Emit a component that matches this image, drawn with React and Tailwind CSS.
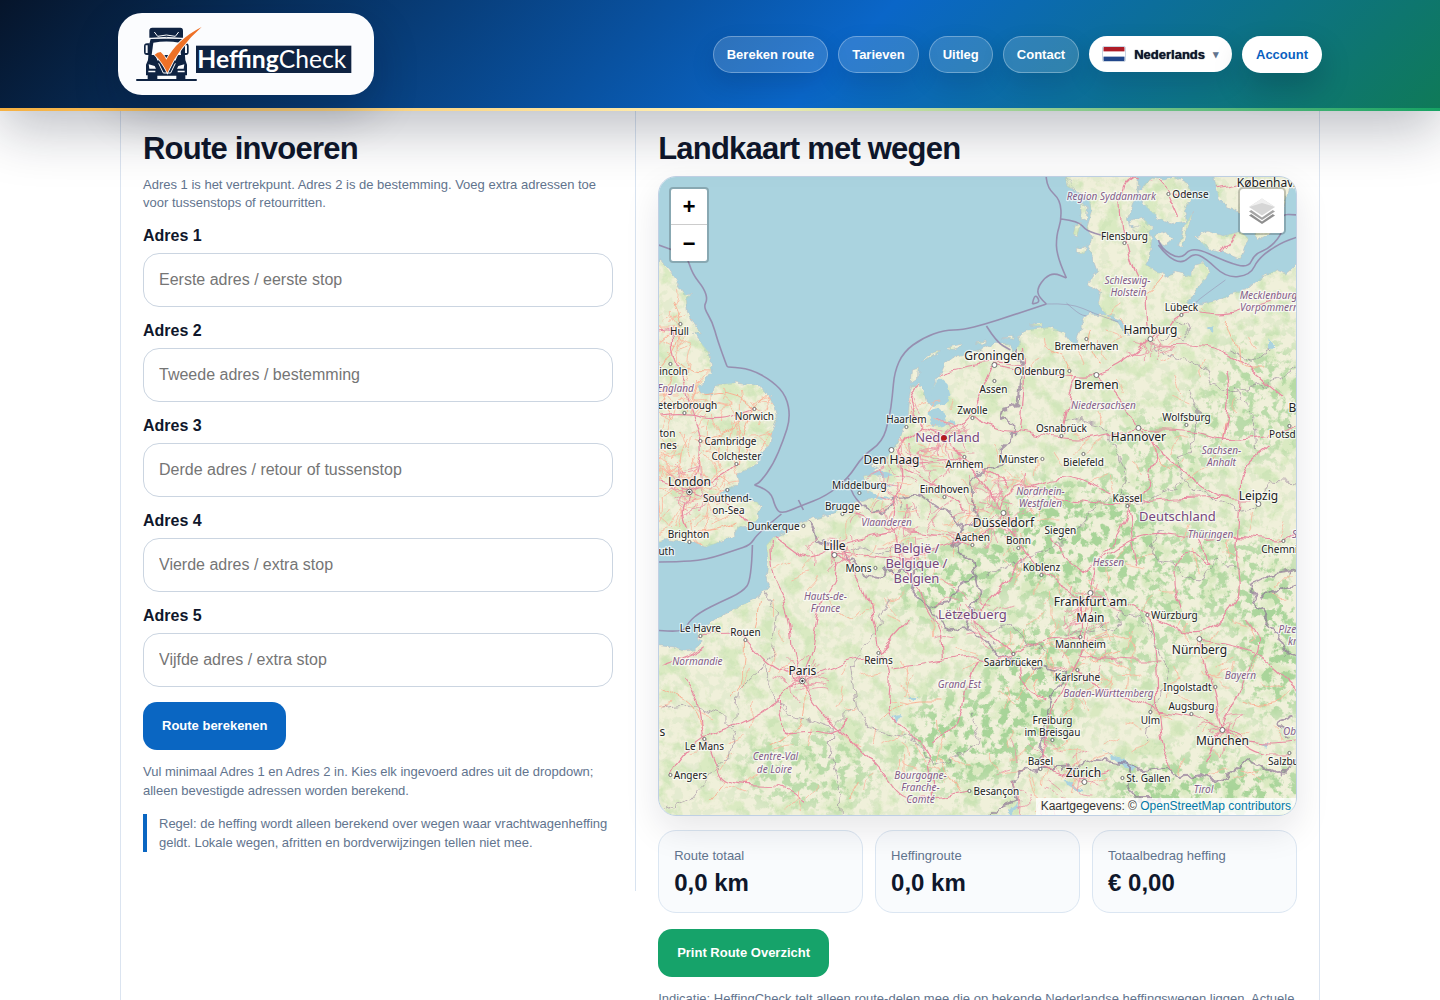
import { useState } from "react";

const navLinks = ["Bereken route", "Tarieven", "Uitleg", "Contact"];

const fields = [
  { id: "adres-1", label: "Adres 1", placeholder: "Eerste adres / eerste stop" },
  { id: "adres-2", label: "Adres 2", placeholder: "Tweede adres / bestemming" },
  { id: "adres-3", label: "Adres 3", placeholder: "Derde adres / retour of tussenstop" },
  { id: "adres-4", label: "Adres 4", placeholder: "Vierde adres / extra stop" },
  { id: "adres-5", label: "Adres 5", placeholder: "Vijfde adres / extra stop" },
];

const totals = [
  { label: "Route totaal", value: "0,0 km" },
  { label: "Heffingroute", value: "0,0 km" },
  { label: "Totaalbedrag heffing", value: "€ 0,00" },
];

// Map geometry
const land = [
  // England
  "M650 255L661 262L668 270L676 281L682 290L686 296L691 295L686 300L687 312L694 325L701 334L692 332L700 342L708 352L711 371L704 380L697 387L701 394L713 393L716 385L733 383L755 385L765 391L773 403L776 418L772 432L768 446L760 453L755 464L746 470L737 473L739 481L732 489L724 490L718 494L728 497L737 501L757 502L760 506L757 520L748 526L739 527L733 535L722 541L706 547L694 543L680 542L668 540L650 545Z",
  // France up to Jutland, then back along the Baltic
  "M650 645L672 647L684 651L692 650L702 641L697 637L696 632L705 627L720 616L742 605L760 596L769 585L766 575L768 560L766 545L772 538L786 532L803 522L830 514L848 505L862 501L872 498L866 490L872 484L866 478L874 470L882 462L892 450L901 434L908 417L909 397L911 385L919 384L925 396L926 404L933 402L938 396L931 389L939 378L945 364L956 356L975 351L998 343L1009 344L1014 352L1019 344L1018 335L1026 330L1050 327L1063 332L1070 341L1076 347L1079 335L1084 318L1090 314L1105 315L1118 323L1128 336L1120 319L1105 314L1098 304L1100 292L1088 283L1092 276L1098 272L1093 258L1087 247L1092 238L1086 228L1091 212L1088 200L1080 192L1070 188L1065 177L1062 170L1138 170L1139 190L1132 204L1128 218L1131 228L1146 226L1151 240L1150 255L1145 264L1156 272L1165 276L1176 272L1190 276L1195 265L1203 263L1209 272L1203 282L1194 293L1188 303L1202 304L1216 301L1230 293L1246 290L1262 276L1276 270L1286 274L1305 258L1305 825L650 825Z",
  "M1145 183L1152 178L1164 180L1176 177L1188 184L1192 197L1184 210L1186 221L1174 223L1158 219L1146 207L1138 194Z",
  "M1192 213L1187 228L1182 247L1179 244L1184 226Z",
  "M1153 235L1165 232L1172 240L1163 246ZM1130 221L1143 218L1152 228L1145 236L1133 231Z",
  "M1212 170L1305 170L1296 186L1288 190L1284 205L1270 232L1258 240L1250 228L1242 214L1226 206L1218 196Z",
  "M1195 236L1208 231L1222 236L1240 232L1248 238L1240 259L1226 253L1206 248Z",
  "M1080 203L1086 206L1085 220L1081 219ZM1075 225L1081 223L1077 236L1073 234ZM1077 246L1086 248L1084 254L1077 253ZM1064 178L1070 180L1074 192L1067 187Z",
  "M912 370L918 368L917 378L911 382ZM921 362L932 353L940 350L930 358ZM948 347L962 344L961 347L950 350ZM975 343L986 341L985 344ZM1003 338L1014 336L1013 339ZM1030 325L1042 323L1041 326Z",
  "M863 476L874 474L882 478L876 484L866 483ZM870 463L884 464L880 471Z",
];

const water = [
  "M931 388L941 379L947 384L950 396L944 404L934 407L928 401ZM928 411L938 409L946 416L942 426L932 427ZM936 424L954 421L955 423L938 427Z",
  "M868 471L884 472L894 475L884 477L870 474ZM866 482L880 486L896 484L880 490L864 486ZM868 492L880 496L892 497L880 500L866 496Z",
  "M1101 750L1112 756L1125 760L1137 768L1131 771L1118 764ZM1063 778L1074 785L1083 791L1078 792L1067 785ZM1007 812L1018 803L1020 806L1010 815Z",
  "M1206 328L1212 325L1213 332ZM1268 337L1274 347L1269 350ZM1261 745L1268 742L1266 749ZM908 697L917 697L912 702ZM890 717L901 715L896 721Z",
];

const borders = [
  "M1012 346L1022 366L1020 385L1018 405L1003 408L1000 418L1014 425L1012 440L1000 450L1002 463L985 468L972 480L973 500L972 512L980 520L963 528L953 543L960 556L972 560L976 575L960 586L948 602L928 606L912 592L915 570L886 570L884 578L863 575L860 568L843 555L843 548L816 541L812 527L803 510L798 503",
  "M862 506L874 513L886 510L894 498L905 496L915 492L926 500L938 508L951 512L962 530L955 545",
  "M976 575L980 590L972 606L966 628L950 630L940 620L928 608",
  "M966 628L986 640L1000 657L1040 668L1066 673L1057 688L1048 705L1042 740L1038 768L1020 772L1012 782L1018 800L998 808L985 820",
  "M1040 768L1060 768L1085 766L1095 760L1130 764L1140 770L1168 768L1180 778L1200 775L1222 782L1248 760L1258 765L1280 775L1296 760",
  "M1130 764L1128 790L1140 800L1162 800M1290 737L1277 722L1292 716",
  "M1296 570L1270 575L1250 585L1255 600L1272 628L1285 650L1297 662M1297 585L1275 590L1260 598",
];

const seaLimits = [
  "M650 242L672 250L686 255L692 274L704 289L707 300L703 307L712 322L717 340L726 365L727 367L729 367L750 369L772 381L786 396L790 418L783 440L773 464L760 482L754 485M754 485L770 490L775 508L781 514L800 506L826 496L848 478L862 456L882 442L889 418L892 396L894 372L903 352L922 338L944 330L962 330L985 324L1010 316L1046 304",
  "M1046 304L1038 297L1037 288L1045 277L1054 273L1066 278M1066 278L1056 256L1056 235L1061 220L1060 200L1047 188L1045 170",
  "M650 562L675 562L705 560L735 550L750 545L756 535L781 514M752 545L751 580L742 592L720 602L700 612L688 622L684 632L650 630",
  "M803 510L798 500M848 478L850 492L862 506M1061 219L1078 221L1086 231L1104 236M986 326L996 342L1010 350M1032 304L1034 293L1040 302L1032 304",
  "M1158 245L1166 256L1182 264L1193 253L1205 258L1226 278L1250 275L1258 258L1280 243L1297 237M1158 240L1160 248L1180 260L1192 246L1226 262L1248 268L1254 254L1270 248L1284 230L1280 214L1297 215",
];
const fairways = ["M1046 304L1070 303L1095 314L1118 322", "M1066 303L1078 314L1086 316", "M1225 280L1200 298L1194 304"];

const stateLines = [
  "M1160 340L1170 335L1184 340L1190 328L1176 320M1150 345L1170 356L1190 362L1212 372L1206 384L1230 392L1262 386L1280 378L1297 365M1188 390L1198 410L1198 430L1190 452L1175 455L1180 470L1185 485L1215 500L1240 512L1255 508L1270 480L1297 482",
  "M1060 420L1075 418L1100 425L1112 445L1128 475L1122 492L1100 500L1084 522L1060 545L1030 555L1010 565L985 575M1122 492L1140 505L1165 492L1180 485M1160 530L1150 545L1157 560L1170 562L1185 575L1200 582L1215 560L1240 570",
  "M1095 620L1105 632L1120 625L1118 610L1140 615L1152 636L1160 655L1168 670L1160 695L1150 710L1145 740M1044 650L1028 645L1012 624L985 632M1065 635L1095 632",
  "M762 590L776 610L772 650L765 665L768 685L785 715L810 720L832 728L855 705L850 665L870 640L880 620L888 600M832 728L830 755L838 790L840 815M855 705L872 730L915 740L935 765L960 755L980 740L970 715",
  "M660 708L690 704L720 715L735 730L728 760L710 775L690 800L660 812M735 725L738 690L765 665",
  "M843 552L860 548L880 555L900 545L935 550M895 498L902 510L920 505M1256 450L1255 420L1240 400L1235 385M1230 350L1250 360L1270 350",
];

const motorways = [
  "M689 490L700 470L703 442L690 410L684 380L670 350L672 330L659 332M689 490L720 478L737 464M689 490L680 510L688 532M689 490L710 500L738 508L750 522M689 490L659 480M659 415L684 412L715 420L754 408",
  "M770 534L785 545L805 560L830 550L834 545M770 540L768 570L785 600L790 625L792 655L802 680M834 552L840 570L820 600L815 640L802 675M834 550L860 575L870 610L878 655",
  "M802 680L775 670L755 650L745 637L725 632L700 637M802 680L780 700L735 725L704 735L680 760L670 776M802 682L812 705L845 735L880 770L900 800L925 800L968 790M802 680L850 660L878 655L892 670L885 722L932 745L932 800",
  "M780 700L780 735L810 730L836 735L850 720M704 735L715 765L725 785L790 785L805 805M892 668L940 662L975 655L990 662L1012 657M932 745L962 720L965 690L978 660M878 655L910 620M660 665L690 655L705 645M704 735L700 700L685 680",
  "M834 545L860 538L893 530L940 535L972 545M893 530L894 505L900 490L905 470L895 455L905 440L918 428M893 530L898 555L910 580L940 625L942 660M842 512L870 520L893 530M834 552L870 556L915 560L945 545L972 540L995 530L1003 515",
  "M918 428L944 437L964 460L985 485L1000 510M944 437L970 415L985 385L994 365M905 470L944 490L963 510M905 440L893 455L915 462L944 458L964 460L990 470L1008 488M918 428L910 400L915 388L935 375L960 368L994 362L1020 366",
  "M970 415L1000 430L1018 430L1061 440L1090 440L1110 435L1138 430L1190 430L1220 440L1270 435L1297 425M1000 510L1008 488L1030 485L1060 475L1090 485L1110 495M1020 430L1025 380L1022 350M1061 435L1070 395L1078 375",
  "M994 365L1020 372L1065 375L1095 377L1120 365L1140 350L1150 340M1150 340L1180 310L1200 312L1225 315L1250 305L1297 290M1150 340L1145 310L1147 290L1135 275L1124 243L1120 210L1122 185L1133 177M1150 345L1190 345L1220 350L1245 365L1280 395",
  "M1095 377L1120 395L1137 430L1158 450L1150 475L1143 500L1127 505L1122 530L1095 565L1090 600L1085 640L1078 670L1060 690L1048 720L1040 768M1138 430L1180 470L1220 500L1250 500M1127 505L1132 540L1137 565",
  "M1003 515L1020 545L1040 572L1070 590L1090 600L1120 600L1147 615L1199 640L1240 605L1235 560L1240 500L1240 470L1270 445M1050 540L1065 560L1090 575L1110 550L1150 530L1200 540L1235 535L1283 542L1297 530",
  "M1199 640L1210 680L1222 728M1199 640L1250 645L1297 690M1222 728L1190 715L1157 712L1120 695L1085 680L1078 672M1157 712L1158 660L1147 615M1222 728L1250 755L1289 755M1222 728L1245 680L1260 640L1245 620M1078 655L1120 660L1160 660",
  "M1012 657L1030 640L1080 637M1012 655L1000 640L972 620M1020 665L1023 690L1045 700M1040 768L1062 775L1083 780L1110 770M1028 555L1000 590L972 620M1030 485L1060 500L1127 505L1170 500L1230 498M1222 440L1230 400L1225 370M1157 712L1160 750L1175 770",
  "M1157 177L1168 195L1192 192L1240 185M1133 177L1150 180M1168 195L1178 218M1215 257L1230 240L1245 205M1180 610L1170 580L1180 555L1200 555L1215 570L1200 540M1080 600L1080 640M1222 728L1205 760M1297 740L1255 745L1225 730",
];

const regionalRoads = [
  "M668 350L684 370L711 371M670 300L680 320L675 345L660 370M672 370L660 400L672 420M754 408L740 440L737 464M754 408L766 395M754 408L735 390L700 395M700 441L725 435L754 410",
  "M689 532L720 530L738 522M802 680L808 700L800 730L770 745M760 600L755 630M745 640L745 680L730 700M830 600L850 620L860 610M880 720L900 700L940 700M940 760L960 790M1016 700L1030 680L1040 660",
  "M1150 440L1155 460L1170 470M1205 470L1220 450L1225 420M1168 270L1150 295L1140 290M1225 320L1240 345L1238 370L1265 370M1275 590L1290 575M1090 660L1120 650M1060 720L1075 700L1100 680M1245 700L1270 710L1290 690",
  "M1060 230L1065 228M1090 330L1085 340L1100 365M1050 350L1065 355L1070 372M660 690L690 700L705 730M725 780L710 800M860 780L850 800",
];

// rounds the corners of an M/L path, segment by segment
function smooth(paths) {
  return paths
    .join("")
    .split("M")
    .filter(Boolean)
    .map((line) => {
      const pts = line.split("L").map((p) => p.trim().split(" ").map(Number));
      let d = `M${pts[0].join(" ")}`;
      for (let i = 1; i < pts.length - 1; i++) {
        const [x, y] = pts[i];
        const [nx, ny] = pts[i + 1];
        d += `Q${x} ${y} ${(x + nx) / 2} ${(y + ny) / 2}`;
      }
      return `${d}L${pts[pts.length - 1].join(" ")}`;
    })
    .join("");
}

// deterministic scatter of local roads round the large cities
function scatter(seed, hubs) {
  let s = seed;
  const rnd = () => {
    s = (s * 16807) % 2147483647;
    return s / 2147483647;
  };
  let d = "";
  hubs.forEach(([cx, cy, r, n]) => {
    for (let i = 0; i < n; i++) {
      const a = rnd() * Math.PI * 2;
      const q = Math.sqrt(rnd()) * r;
      let x = cx + Math.cos(a) * q;
      let y = cy + Math.sin(a) * q;
      let dir = rnd() * Math.PI * 2;
      d += `M${Math.round(x)} ${Math.round(y)}`;
      for (let k = 0; k < 3; k++) {
        dir += rnd() - 0.5;
        x += Math.cos(dir) * (4 + rnd() * 5);
        y += Math.sin(dir) * (4 + rnd() * 5);
        d += `L${Math.round(x)} ${Math.round(y)}`;
      }
    }
  });
  return d;
}

const localOrange = scatter(71, [
  [689, 490, 50, 80], [690, 430, 55, 60], [668, 330, 30, 26], [735, 425, 38, 28],
  [930, 440, 40, 26], [900, 535, 60, 34], [1010, 500, 45, 30], [1140, 560, 140, 36],
  [1080, 640, 60, 34], [1050, 790, 60, 26], [800, 690, 130, 40], [1200, 700, 90, 28],
  [1150, 380, 120, 26], [960, 700, 80, 20],
]);
const localPink = scatter(29, [
  [689, 490, 22, 18], [930, 445, 38, 36], [905, 510, 48, 40], [1000, 505, 30, 38],
  [802, 680, 14, 20], [1090, 610, 26, 18], [1150, 340, 16, 10], [1222, 728, 14, 10],
  [1080, 650, 30, 12], [1050, 785, 45, 22], [965, 610, 30, 16], [834, 555, 30, 12],
]);

const cities = [
  ["Hull", 679, 335], ["incoln", 673, 375], ["eterborough", 687, 409], ["Norwich", 754, 420],
  ["ton", 667, 437], ["nes", 668, 449], ["Cambridge", 730, 445], ["Colchester", 736, 460],
  ["Southend-", 727, 502], ["on-Sea", 728, 514], ["Brighton", 688, 538], ["uth", 666, 555],
  ["Odense", 1190, 198], ["Flensburg", 1124, 240], ["Lübeck", 1181, 311], ["Bremerhaven", 1086, 350],
  ["Oldenburg", 1039, 375], ["Assen", 993, 393], ["Zwolle", 972, 414], ["Haarlem", 906, 423],
  ["Osnabrück", 1061, 432], ["Wolfsburg", 1186, 421], ["Potsd", 1282, 438], ["Münster", 1018, 463],
  ["Bielefeld", 1083, 466], ["Arnhem", 964, 468], ["Middelburg", 859, 489], ["Eindhoven", 944, 493],
  ["Kassel", 1127, 502], ["Brugge", 842, 510], ["Dunkerque", 773, 530], ["Aachen", 972, 541],
  ["Bonn", 1018, 544], ["Siegen", 1060, 534], ["Mons", 858, 572], ["Koblenz", 1041, 571],
  ["Chemni", 1279, 553], ["Le Havre", 700, 632], ["Rouen", 745, 636], ["Reims", 878, 664],
  ["Würzburg", 1174, 619], ["Mannheim", 1080, 648], ["Saarbrücken", 1013, 666], ["Karlsruhe", 1077, 681],
  ["Ingolstadt", 1187, 691], ["Augsburg", 1191, 710], ["Ulm", 1150, 724], ["Freiburg", 1052, 724],
  ["im Breisgau", 1052, 736], ["Le Mans", 704, 750], ["Angers", 690, 779], ["Basel", 1040, 765],
  ["St. Gallen", 1148, 782], ["Besançon", 996, 795], ["Salzbu", 1283, 765],
];
const bigCities = [
  ["London", 689, 486], ["Københav.", 1266, 187], ["Hamburg", 1150, 334], ["Groningen", 994, 360],
  ["Bremen", 1096, 389], ["Hannover", 1138, 441], ["B", 1292, 412], ["Den Haag", 891, 464],
  ["Leipzig", 1258, 500], ["Düsseldorf", 1003, 527], ["Lille", 834, 550], ["Frankfurt am", 1090, 606],
  ["Main", 1090, 622], ["Nürnberg", 1199, 654], ["Paris", 802, 675], ["München", 1222, 745],
  ["Zürich", 1083, 777], ["s", 662, 736],
];
const regions = [
  ["England", 675, 392], ["Region Syddanmark", 1111, 200], ["Schleswig-", 1127, 284], ["Holstein", 1128, 296],
  ["Mecklenburg", 1268, 299], ["Vorpommern", 1269, 311], ["Niedersachsen", 1103, 409], ["Sachsen-", 1221, 454],
  ["Anhalt", 1221, 466], ["Nordrhein-", 1040, 495], ["Westfalen", 1040, 507], ["Vlaanderen", 886, 526],
  ["Hauts-de-", 825, 600], ["France", 825, 612], ["Hessen", 1108, 566], ["Thüringen", 1210, 538],
  ["Normandie", 697, 665], ["Grand Est", 959, 688], ["Baden-Württemberg", 1108, 697], ["Bayern", 1240, 679],
  ["Centre-Val", 775, 760], ["de Loire", 774, 773], ["Bourgogne-", 920, 779], ["Franche-", 920, 791],
  ["Comté", 920, 803], ["Tirol", 1203, 793], ["Plze", 1287, 633], ["kr", 1292, 645], ["Ob", 1289, 735], ["S", 1294, 538],
];
const countries = [
  ["Nederland", 947, 442], ["Deutschland", 1177, 521], ["België /", 916, 553], ["Belgique /", 916, 568],
  ["Belgien", 916, 583], ["Lëtzebuerg", 972, 619],
];

const smallDots = [
  [680, 324], [670, 364], [684, 413], [754, 409], [700, 441], [736, 464], [727, 490], [689, 542],
  [1168, 194], [1124, 243], [1181, 315], [1086, 339], [1069, 371], [994, 381], [972, 418], [906, 427],
  [1061, 436], [1186, 425], [1289, 426], [1042, 459], [1083, 454], [964, 457], [859, 493], [944, 497],
  [1127, 506], [842, 514], [803, 526], [972, 545], [1018, 548], [1060, 538], [875, 568], [1041, 575],
  [1283, 541], [700, 636], [745, 640], [878, 653], [1147, 615], [1080, 637], [1013, 654], [1077, 670],
  [1215, 687], [1191, 714], [1150, 712], [1052, 740], [704, 739], [670, 775], [1040, 769], [1122, 778],
  [969, 791], [1289, 753],
];
const bigDots = [[1150, 339], [994, 365], [1096, 375], [1138, 428], [891, 450], [1258, 504], [1003, 513], [834, 555], [1090, 593], [1199, 639], [1222, 730], [1084, 782]];
const capitals = [[689, 492], [802, 681]];

function Labels({ items, className }) {
  return (
    <g className={className} textAnchor="middle">
      {items.map(([text, x, y]) => (
        <text key={text + x + y} x={x} y={y}>{text}</text>
      ))}
    </g>
  );
}

function RoadMap() {
  return (
    <svg
      viewBox="658 177 638 638"
      preserveAspectRatio="xMidYMid slice"
      className="h-full w-full bg-[#aad3df] font-['Noto_Sans',sans-serif]"
      role="img"
      aria-label="Landkaart"
    >
      <defs>
        <clipPath id="land-clip">
          <path d={land.join("")} />
        </clipPath>
        <filter id="coast" filterUnits="userSpaceOnUse" x="640" y="160" width="680" height="680" colorInterpolationFilters="sRGB">
          <feTurbulence type="fractalNoise" baseFrequency="0.12" numOctaves="3" seed="4" result="n" />
          <feDisplacementMap in="SourceGraphic" in2="n" scale="7" xChannelSelector="R" yChannelSelector="G" />
        </filter>
        <filter id="bends" filterUnits="userSpaceOnUse" x="640" y="160" width="680" height="680" colorInterpolationFilters="sRGB">
          <feTurbulence type="fractalNoise" baseFrequency="0.045" numOctaves="2" seed="9" result="n" />
          <feDisplacementMap in="SourceGraphic" in2="n" scale="13" xChannelSelector="R" yChannelSelector="G" />
        </filter>
        <filter id="jagged" filterUnits="userSpaceOnUse" x="640" y="160" width="680" height="680" colorInterpolationFilters="sRGB">
          <feTurbulence type="fractalNoise" baseFrequency="0.1" numOctaves="2" seed="5" result="n" />
          <feDisplacementMap in="SourceGraphic" in2="n" scale="12" xChannelSelector="R" yChannelSelector="G" />
        </filter>
        <filter id="woods" filterUnits="userSpaceOnUse" x="640" y="160" width="680" height="680" colorInterpolationFilters="sRGB">
          <feTurbulence type="fractalNoise" baseFrequency="0.11" numOctaves="5" seed="12" />
          <feColorMatrix values="0 0 0 0 0.66  0 0 0 0 0.83  0 0 0 0 0.6  8 0 0 0 -3.9" result="w" />
          <feComposite in="w" in2="SourceGraphic" operator="in" />
        </filter>
        <filter id="meadow" filterUnits="userSpaceOnUse" x="640" y="160" width="680" height="680" colorInterpolationFilters="sRGB">
          <feTurbulence type="fractalNoise" baseFrequency="0.05" numOctaves="5" seed="31" />
          <feColorMatrix values="0 0 0 0 0.8  0 0 0 0 0.9  0 0 0 0 0.7  6 0 0 0 -3" result="w" />
          <feComposite in="w" in2="SourceGraphic" operator="in" />
        </filter>
        <filter id="soft">
          <feGaussianBlur stdDeviation="14" />
        </filter>
        <mask id="hills">
          <g fill="#fff" filter="url(#soft)">
            <rect x="640" y="160" width="700" height="700" fillOpacity="0.16" />
            <ellipse cx="1070" cy="540" rx="95" ry="60" />
            <ellipse cx="1160" cy="455" rx="60" ry="50" fillOpacity="0.6" />
            <ellipse cx="1210" cy="575" rx="90" ry="45" fillOpacity="0.8" />
            <ellipse cx="945" cy="585" rx="50" ry="35" />
            <ellipse cx="1030" cy="690" rx="45" ry="75" />
            <ellipse cx="1275" cy="650" rx="40" ry="70" />
            <ellipse cx="1210" cy="790" rx="110" ry="35" />
            <ellipse cx="960" cy="740" rx="60" ry="50" />
            <ellipse cx="810" cy="770" rx="70" ry="40" fillOpacity="0.7" />
            <ellipse cx="1260" cy="400" rx="60" ry="60" fillOpacity="0.7" />
            <ellipse cx="1130" cy="640" rx="70" ry="40" fillOpacity="0.6" />
          </g>
        </mask>
      </defs>

      <g filter="url(#coast)">
        <path d={land.join("")} fill="#f0f0da" stroke="#b9bfc4" strokeWidth="0.6" />
      </g>
      <g clipPath="url(#land-clip)">
        <rect x="640" y="160" width="680" height="680" filter="url(#meadow)" opacity="0.6" />
        <g mask="url(#hills)">
          <rect x="640" y="160" width="680" height="680" filter="url(#woods)" />
        </g>
      </g>
      <g filter="url(#coast)">
        <path d={water.join("")} fill="#aad3df" />
      </g>

      <g fill="none" strokeLinejoin="round" clipPath="url(#land-clip)">
        <g filter="url(#bends)">
          <path d={smooth([localOrange])} stroke="#fbb59d" strokeWidth="0.8" />
          <path d={smooth(regionalRoads)} stroke="#fbab8f" strokeWidth="0.9" />
        </g>
        <path d={stateLines.join("")} stroke="#8b6f93" strokeOpacity="0.5" strokeWidth="1" filter="url(#jagged)" />
        <path d={borders.join("")} stroke="#8b6f93" strokeOpacity="0.65" strokeWidth="2" filter="url(#jagged)" />
        <g filter="url(#bends)">
          <path d={smooth([localPink])} stroke="#ec93a6" strokeWidth="0.8" />
          <path d={smooth(motorways)} stroke="#e98ba1" strokeWidth="1.2" />
        </g>
      </g>
      <g fill="none" stroke="#9382a8" strokeLinejoin="round">
        <path d={smooth(seaLimits)} strokeOpacity="0.85" strokeWidth="1.6" />
        <path d={smooth(fairways)} strokeOpacity="0.6" strokeWidth="0.8" />
      </g>

      <g fill="#fff" stroke="#555" strokeWidth="0.8">
        {smallDots.map(([x, y]) => <circle key={`${x}-${y}`} cx={x} cy={y} r="1.6" />)}
        {bigDots.map(([x, y]) => <circle key={`${x}-${y}`} cx={x} cy={y} r="2.5" />)}
        {capitals.map(([x, y]) => (
          <g key={`${x}-${y}`}>
            <circle cx={x} cy={y} r="2.8" />
            <circle cx={x} cy={y} r="1.2" fill="#333" stroke="none" />
          </g>
        ))}
      </g>

      <g stroke="#fff" strokeOpacity="0.7" strokeWidth="2.4" strokeLinejoin="round" style={{ paintOrder: "stroke" }}>
        <Labels items={regions} className="fill-[#835d88] text-[10px] italic" />
        <Labels items={countries} className="fill-[#76477c] text-[13px]" />
        <Labels items={cities} className="fill-[#222] text-[10px]" />
        <Labels items={bigCities} className="fill-[#222] text-[12px]" />
      </g>

      <circle cx="943.5" cy="438" r="2.8" fill="#b71c1c" />
    </svg>
  );
}

function Logo() {
  return (
    <svg viewBox="108 78 660 168" className="h-14 w-[220px]" role="img" aria-label="HeffingCheck">
      <g fill="#0f2342">
        <path d="M157 83H241Q249 83 249 92V113H148V92Q148 83 157 83Z" />
        <path d="M152 116H246L252 132L256 180L261 194V226H256V240H229V227H172V240H143V226H138V194L144 180L148 132Z" />
        <path d="M141 130H149V165H141Q132 165 132 156V139Q132 130 141 130ZM250 130H258Q266 130 266 139V156Q266 165 258 165H250Z" />
        <rect x="108" y="237" width="183" height="6" rx="3" />
      </g>
      <path d="M163 96L173 109Q199 101 226 109L236 96" fill="none" stroke="#fbfcfe" strokeWidth="3" />
      <path d="M148 116Q199 108 250 116" fill="none" stroke="#fbfcfe" strokeWidth="3" />
      <g fill="#fbfcfe">
        <path d="M160 128Q199 121 239 128L243 165H155Z" />
        <path d="M137 136H143V159H137ZM255 136H261V159H255Z" />
        <path d="M146 193L164 198L168 206H148ZM253 193L235 198L231 206H251Z" />
        <path d="M145 212H166V217H145ZM233 212H254V217H233Z" />
      </g>
      <path d="M176 190L190 219H212L226 190M170 172L174 182M229 172L225 182" fill="none" stroke="#fbfcfe" strokeWidth="3" />
      <path
        d="M164 164Q172 157 182 156Q193 166 199 179Q232 118 305 81Q237 140 202 218Q187 186 164 164Z"
        fill="#ee7127"
        stroke="#fbfcfe"
        strokeWidth="5"
        style={{ paintOrder: "stroke" }}
      />
      <rect x="288" y="137" width="466" height="82" fill="#0f2342" />
      <text x="292" y="203" fill="#fff" className="font-[Lato,sans-serif] text-[74px]">
        <tspan className="font-bold">Heffing</tspan>
        <tspan className="font-normal">Check</tspan>
      </text>
    </svg>
  );
}

function Header() {
  return (
    <header className="relative z-10 shadow-[0_18px_55px_rgba(15,23,42,0.28)]">
      <div className="bg-[linear-gradient(135deg,#06152b_0%,#0a66c8_58%,#0f7a58_100%)]">
        <div className="mx-auto flex max-w-[1240px] items-center justify-between px-[18px] py-[13px]">
          <a
            href="#home"
            className="rounded-3xl bg-[#fbfcfe] px-[18px] py-[13px] shadow-[0_18px_45px_rgba(2,12,32,0.22)]"
          >
            <Logo />
          </a>
          <nav className="flex items-center gap-[10px] text-[13px] leading-[15px] font-bold text-white">
            {navLinks.map((link) => (
              <a
                key={link}
                href="#"
                className="rounded-full border border-white/30 bg-white/15 px-[13px] py-[10px] shadow-[0_10px_24px_rgba(2,12,32,0.14)]"
              >
                {link}
              </a>
            ))}
            <button
              type="button"
              className="flex items-center gap-2 rounded-full bg-white px-[13px] py-[10px] text-slate-900 shadow-[0_10px_24px_rgba(2,12,32,0.14)]"
            >
              <svg viewBox="0 0 24 16" className="h-4 w-6 rounded-xs border border-slate-300" aria-hidden="true">
                <rect width="24" height="16" fill="#fff" />
                <rect width="24" height="5" fill="#ae1c28" />
                <rect y="11" width="24" height="5" fill="#21468b" />
              </svg>
              <span className="font-black [text-shadow:0_0_1px_#0f172a]">Nederlands</span>
              <span className="text-[11px] text-slate-500">▾</span>
            </button>
            <a
              href="#account"
              className="rounded-full bg-white px-[14px] py-[11px] text-[#0a5fc0] shadow-[0_14px_30px_rgba(2,12,32,0.22)]"
            >
              Account
            </a>
          </nav>
        </div>
      </div>
      <div className="h-[3px] bg-[linear-gradient(90deg,#f5b041,#fff0b5_50%,#16a364)]" />
    </header>
  );
}

function RouteForm() {
  const [values, setValues] = useState({});

  return (
    <section className="min-h-[780px] border-r border-[#d8e3f0] p-[22px]">
      <h1 className="text-[31px] leading-[31px] font-bold tracking-tight">Route invoeren</h1>
      <p className="mt-3 text-[13px] leading-[18px] text-slate-500">
        Adres 1 is het vertrekpunt. Adres 2 is de bestemming. Voeg extra adressen toe voor tussenstops of retourritten.
      </p>
      <form onSubmit={(e) => e.preventDefault()}>
        {fields.map((field) => (
          <div key={field.id} className="mt-[14px]">
            <label htmlFor={field.id} className="block text-base leading-5 font-bold">
              {field.label}
            </label>
            <input
              id={field.id}
              type="text"
              value={values[field.id] || ""}
              onChange={(e) => setValues({ ...values, [field.id]: e.target.value })}
              placeholder={field.placeholder}
              className="mt-[7px] block h-[54px] w-full rounded-2xl border border-[#cbd5e1] bg-white px-[15px] text-base placeholder:text-[#757575]"
            />
          </div>
        ))}
        <button type="submit" className="mt-[15px] h-12 rounded-[14px] bg-[#0a66c2] px-[19px] text-[13px] font-bold text-white">
          Route berekenen
        </button>
      </form>
      <p className="mt-3 text-[13px] leading-[19px] text-slate-500">
        Vul minimaal Adres 1 en Adres 2 in. Kies elk ingevoerd adres uit de dropdown; alleen bevestigde adressen worden berekend.
      </p>
      <p className="mt-[14px] border-l-4 border-[#0a66c2] pl-3 text-[13px] leading-[19px] text-slate-500">
        Regel: de heffing wordt alleen berekend over wegen waar vrachtwagenheffing geldt. Lokale wegen, afritten en bordverwijzingen tellen niet mee.
      </p>
    </section>
  );
}

function MapPanel() {
  return (
    <section className="min-w-0 p-[22px]">
      <h2 className="text-[31px] leading-[31px] font-bold tracking-tight">Landkaart met wegen</h2>
      <div className="relative mt-3 h-[640px] overflow-hidden rounded-[18px] border border-[#bfd0e4] shadow-[0_14px_35px_rgba(15,23,42,0.1)]">
        <RoadMap />

        {/* Zoom control */}
        <div className="absolute top-[10px] left-[10px] flex flex-col overflow-hidden rounded border-2 border-black/20 bg-white bg-clip-padding font-['Liberation_Mono',monospace] text-[22px] font-bold text-black">
          <button type="button" aria-label="Inzoomen" className="flex size-9 items-center justify-center border-b border-[#ccc] pt-1">
            +
          </button>
          <button type="button" aria-label="Uitzoomen" className="flex size-9 items-center justify-center pt-1">
            −
          </button>
        </div>

        {/* Layer switch */}
        <button
          type="button"
          aria-label="Kaartlagen"
          className="absolute top-[10px] right-[10px] flex size-12 items-center justify-center rounded-[5px] border-2 border-black/20 bg-white bg-clip-padding"
        >
          <svg viewBox="0 0 26 26" className="size-[26px]" aria-hidden="true">
            <path d="M0 17.5L13 9L26 17.5L13 26Z" fill="#8e8e8e" />
            <path d="M0 14.5L13 6L26 14.5L13 23.5Z" fill="#fff" />
            <path d="M0 13.5L13 5L26 13.5L13 22Z" fill="#a4a4a4" />
            <path d="M0 10.5L13 2L26 10.5L13 19.5Z" fill="#fff" />
            <path d="M0 9L13 0.5L26 9L13 17.5Z" fill="#d6d6d6" />
            <path d="M0 9L13 0.5L26 9L13 5Z" fill="#efefef" />
          </svg>
        </button>

        <div className="absolute right-0 bottom-0 bg-white/80 px-[5px] text-xs leading-[17px] text-[#333]">
          Kaartgegevens: ©{" "}
          <a href="#osm" className="text-[#0078a8]">
            OpenStreetMap contributors
          </a>
        </div>
      </div>

      <div className="mt-[14px] grid grid-cols-3 gap-3">
        {totals.map((item) => (
          <div key={item.label} className="rounded-[18px] border border-[#dbe6f2] bg-slate-50/80 px-[15px] pt-4 pb-[15px]">
            <div className="text-[13px] leading-[18px] text-slate-500">{item.label}</div>
            <div className="mt-1 text-2xl leading-7 font-bold">{item.value}</div>
          </div>
        ))}
      </div>

      <button type="button" className="mt-4 h-12 rounded-[14px] bg-[#16a36a] px-[19px] text-[13px] font-bold text-white">
        Print Route Overzicht
      </button>
      <p className="mt-3 text-[13px] leading-[19px] text-slate-500">
        Indicatie: HeffingCheck telt alleen route-delen mee die op bekende Nederlandse heffingswegen liggen. Actuele
      </p>
    </section>
  );
}

export default function App() {
  return (
    <div className="min-h-screen bg-white font-['Liberation_Sans',Arial,sans-serif] text-slate-900">
      <Header />
      <main className="mx-auto grid max-w-[1200px] grid-cols-[43fr_57fr] items-start border-x border-[#dbe4f0]">
        <RouteForm />
        <MapPanel />
      </main>
    </div>
  );
}
